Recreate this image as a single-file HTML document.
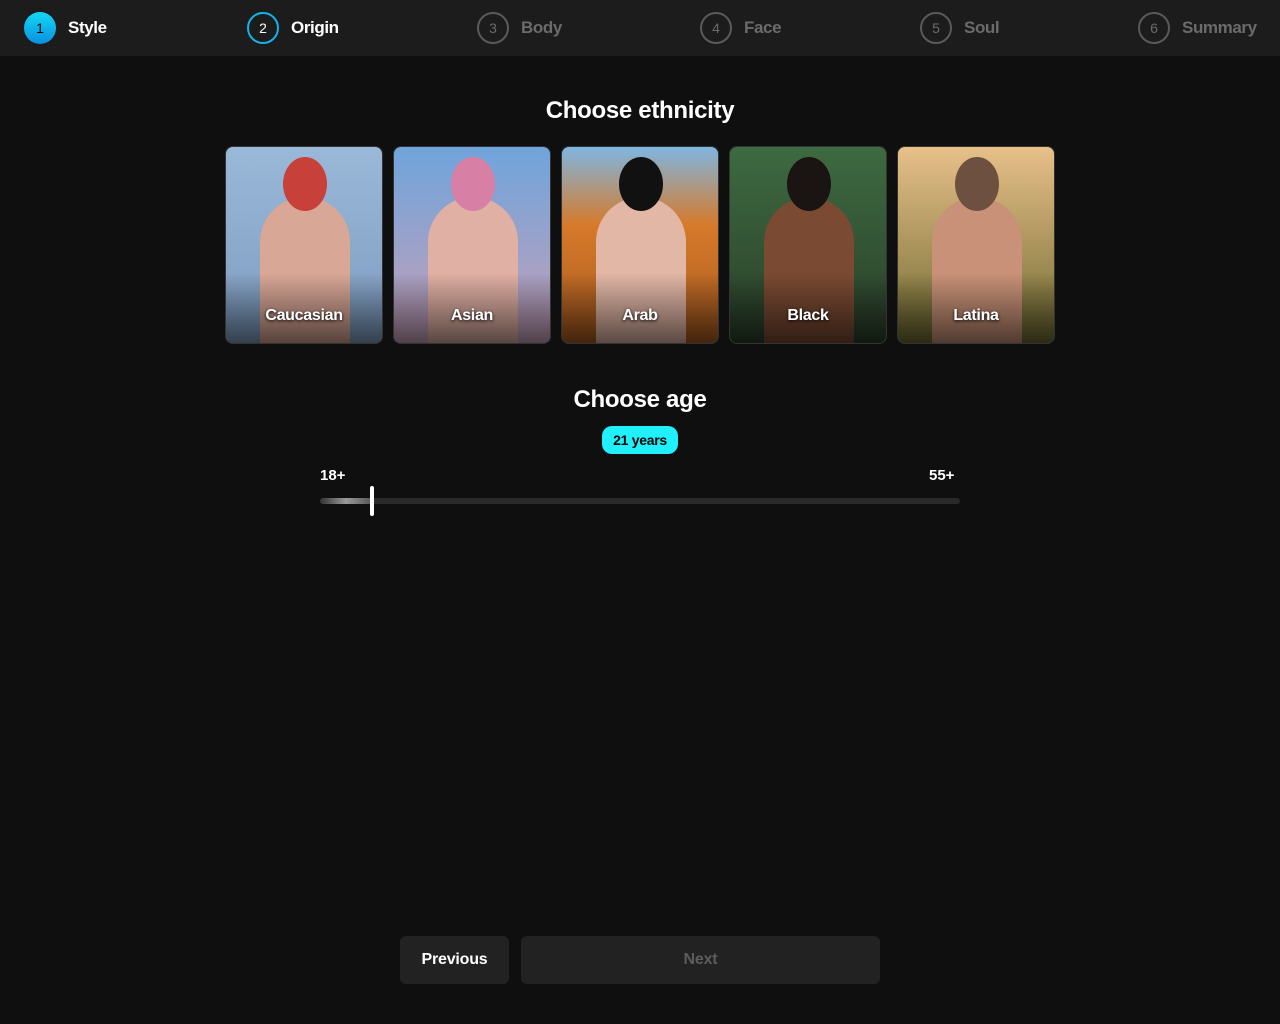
<!DOCTYPE html>
<html><head><meta charset="utf-8"><style>
*{margin:0;padding:0;box-sizing:border-box}
body{width:1280px;height:1024px;background:#0f0f0f;font-family:"Liberation Sans",sans-serif;color:#fff;position:relative;overflow:hidden}
.nav{position:absolute;left:0;top:0;width:1280px;height:56px;background:#1c1c1c}
.st{position:absolute;top:12px;height:32px;display:flex;align-items:center;font-size:17px;font-weight:bold;letter-spacing:-0.4px}
.c{width:32px;height:32px;border-radius:50%;display:flex;align-items:center;justify-content:center;font-size:14px;font-weight:normal;margin-right:12px;letter-spacing:0}
.dim{color:#6b6b6b}.dim .c{border:2px solid #5a5a5a;color:#6b6b6b}
h2{position:absolute;width:1280px;text-align:center;font-size:24px;font-weight:bold;letter-spacing:-0.3px}
.card{position:absolute;top:146px;width:158px;height:198px;border-radius:8px;overflow:hidden;border:1px solid #333}
.card span{position:absolute;bottom:18px;width:100%;text-align:center;font-size:16px;font-weight:bold;text-shadow:0 1px 3px #000;letter-spacing:-0.3px}
.card .body{position:absolute;left:34px;top:50px;width:90px;height:160px;border-radius:45px 45px 10px 10px}
.card .head{position:absolute;left:57px;top:10px;width:44px;height:54px;border-radius:50%}
.card .sh{position:absolute;left:0;bottom:0;width:100%;height:70px;background:linear-gradient(transparent,rgba(0,0,0,.6))}
.btn{position:absolute;top:936px;height:48px;border-radius:6px;background:#222;font-size:16px;font-weight:bold;text-align:center;line-height:48px;letter-spacing:-0.2px}
</style></head><body>
<div class="nav">
<div class="st" style="left:24px"><div class="c" style="background:linear-gradient(#13d8f5,#0a8fe0);color:#000">1</div>Style</div>
<div class="st" style="left:247px"><div class="c" style="border:2px solid #12b3e8">2</div>Origin</div>
<div class="st dim" style="left:477px"><div class="c">3</div>Body</div>
<div class="st dim" style="left:700px"><div class="c">4</div>Face</div>
<div class="st dim" style="left:920px"><div class="c">5</div>Soul</div>
<div class="st dim" style="left:1138px"><div class="c">6</div>Summary</div>
</div>
<h2 style="top:97px">Choose ethnicity</h2>
<div class="card" style="left:225px;background:linear-gradient(#9ab8d8,#7e9cc0)"><div class="body" style="background:#d9a796"></div><div class="head" style="background:#c8403a"></div><div class="sh"></div><span>Caucasian</span></div>
<div class="card" style="left:393px;background:linear-gradient(#6fa4dc,#c7a0b8)"><div class="body" style="background:#e0b0a4"></div><div class="head" style="background:#d87fa5"></div><div class="sh"></div><span>Asian</span></div>
<div class="card" style="left:561px;background:linear-gradient(#7fb6e0 0%,#d67a2a 40%,#a85a20)"><div class="body" style="background:#e2b7a6"></div><div class="head" style="background:#111"></div><div class="sh"></div><span>Arab</span></div>
<div class="card" style="left:729px;background:linear-gradient(#3d6a40,#2b3f2a)"><div class="body" style="background:#7a4a32"></div><div class="head" style="background:#1a1412"></div><div class="sh"></div><span>Black</span></div>
<div class="card" style="left:897px;background:linear-gradient(#e8c08a,#6e6a30)"><div class="body" style="background:#c99278"></div><div class="head" style="background:#6e5040"></div><div class="sh"></div><span>Latina</span></div>
<h2 style="top:386px">Choose age</h2>
<div style="position:absolute;left:602px;top:426px;width:76px;height:28px;border-radius:10px;background:#1ff0fb;color:#000;font-size:14px;font-weight:bold;text-align:center;line-height:28px;letter-spacing:-0.3px">21 years</div>
<div style="position:absolute;left:320px;top:467px;font-size:15px;font-weight:bold">18+</div>
<div style="position:absolute;left:929px;top:467px;font-size:15px;font-weight:bold">55+</div>
<div style="position:absolute;left:320px;top:498px;width:640px;height:6px;border-radius:3px;background:#2a2a2a"></div>
<div style="position:absolute;left:320px;top:498px;width:52px;height:6px;border-radius:3px;background:linear-gradient(90deg,#333,#999,#555)"></div>
<div style="position:absolute;left:370px;top:486px;width:4px;height:30px;border-radius:2px;background:#fff"></div>
<div class="btn" style="left:400px;width:109px">Previous</div>
<div class="btn" style="left:521px;width:359px;color:#5c5c5c">Next</div>
</body></html>
